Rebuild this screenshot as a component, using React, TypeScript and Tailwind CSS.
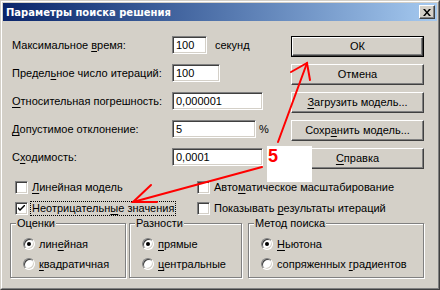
import React from 'react'

const font = "font-['Liberation_Sans',Arial,sans-serif]"

const raised =
  'border border-t-white border-l-white border-b-[#404040] border-r-[#404040] shadow-[inset_-1px_-1px_0_#808080,inset_1px_1px_0_#d4d0c8]'
const sunken =
  'border border-t-[#808080] border-l-[#808080] border-b-white border-r-white shadow-[inset_1px_1px_0_#404040,inset_-1px_-1px_0_#d4d0c8]'

function U({ children }: { children: React.ReactNode }) {
  return <span className="underline underline-offset-[2px]">{children}</span>
}

function Field({ value, w }: { value: string; w: string }) {
  return (
    <div className={`${sunken} ${w} h-[18px] bg-white pl-[3px] leading-[16px]`}>{value}</div>
  )
}

function Btn({ children, def }: { children: React.ReactNode; def?: boolean }) {
  if (def) {
    return (
      <div className="h-[21px] border border-black">
        <div className={`${raised} h-full flex items-center justify-center`}>{children}</div>
      </div>
    )
  }
  return <div className={`${raised} h-[21px] flex items-center justify-center`}>{children}</div>
}

function Check({ checked, focus, children }: { checked?: boolean; focus?: boolean; children: React.ReactNode }) {
  return (
    <div className="h-[21px] flex items-center">
      <div className={`${sunken} w-[13px] h-[13px] bg-white flex items-center justify-center shrink-0`}>
        {checked && (
          <svg width="7" height="7" viewBox="0 0 7 7">
            <path d="M0 2 L0 4 L2 6 L7 1 L7 -1 L2 4 Z" fill="#000" />
          </svg>
        )}
      </div>
      <span
        className={`ml-[2px] px-[1px] leading-[13px] border ${focus ? 'border-dotted border-black' : 'border-transparent'}`}
      >
        {children}
      </span>
    </div>
  )
}

function Radio({ on, children }: { on?: boolean; children: React.ReactNode }) {
  return (
    <div className="h-[20px] flex items-center">
      <div className="w-[12px] h-[12px] rounded-full bg-white border border-t-[#808080] border-l-[#808080] border-b-white border-r-white shadow-[inset_1px_1px_0_#404040,inset_-1px_-1px_0_#d4d0c8] flex items-center justify-center shrink-0">
        {on && <div className="w-[4px] h-[4px] rounded-full bg-black" />}
      </div>
      <span className="ml-[4px]">{children}</span>
    </div>
  )
}

function Group({ title, w, children }: { title: string; w: string; children: React.ReactNode }) {
  return (
    <div
      className={`relative ${w} h-[55px] border border-[#808080] shadow-[1px_1px_0_#fff,inset_1px_1px_0_#fff] pl-[12px] pt-[10px]`}
    >
      <span className="absolute left-[5px] -top-[7px] bg-[#d4d0c8] px-[1px] leading-[13px]">{title}</span>
      {children}
    </div>
  )
}

export default function App() {
  return (
    <div className={`${font} text-[11px] text-black w-[440px] h-[290px] bg-[#d4d0c8] flex border border-t-[#d4d0c8] border-l-[#d4d0c8] border-b-[#404040] border-r-[#404040]`}>
      <div className="flex-1 flex flex-col p-px border border-t-white border-l-white border-b-[#808080] border-r-[#808080]">
        <div className="h-[18px] flex items-center bg-gradient-to-r from-[#0a246a] to-[#a6caf0] pl-[3px] pr-[2px]">
          <span className="text-white font-bold text-[10px] font-['DejaVu_Sans',sans-serif]">Параметры поиска решения</span>
          <div className={`${raised} ml-auto w-[16px] h-[14px] bg-[#d4d0c8] flex items-center justify-center`}>
            <svg width="8" height="7" viewBox="0 0 8 7">
              <path d="M0 0h2l2 2.5L6 0h2L5 3.5 8 7H6L4 4.5 2 7H0l3-3.5z" fill="#000" />
            </svg>
          </div>
        </div>

        <div className="flex-1 pl-[9px] pt-[15px]">
          <div className="flex">
            <div className="w-[279px]">
              <div className="h-[28px] flex items-start">
                <span className="w-[160px] leading-[18px]">Максимальное <U>в</U>ремя:</span>
                <Field value="100" w="w-[35px]" />
                <span className="ml-[8px] leading-[18px]">секунд</span>
              </div>
              <div className="h-[28px] flex items-start">
                <span className="w-[160px] leading-[18px]">Предел<U>ь</U>ное число итераций:</span>
                <Field value="100" w="w-[48px]" />
              </div>
              <div className="h-[28px] flex items-start">
                <span className="w-[160px] leading-[18px]"><U>О</U>тносительная погрешность:</span>
                <Field value="0,000001" w="w-[91px]" />
              </div>
              <div className="h-[28px] flex items-start">
                <span className="w-[160px] leading-[18px]"><U>Д</U>опустимое отклонение:</span>
                <Field value="5" w="w-[84px]" />
                <span className="ml-[3px] leading-[18px]">%</span>
              </div>
              <div className="h-[28px] flex items-start">
                <span className="w-[160px] leading-[18px]">С<U>х</U>одимость:</span>
                <Field value="0,0001" w="w-[91px]" />
              </div>
            </div>
            <div className="w-[133px] flex flex-col gap-[7px]">
              <Btn def>ОК</Btn>
              <Btn>Отмена</Btn>
              <Btn><span><U>З</U>агрузить модель...</span></Btn>
              <Btn><span>Сохр<U>а</U>нить модель...</span></Btn>
              <Btn><span><U>С</U>правка</span></Btn>
            </div>
          </div>

          <div className="mt-[1px] pl-[3px] grid grid-cols-[182px_1fr]">
            <Check><U>Л</U>инейная модель</Check>
            <Check>Авто<U>м</U>атическое масштабирование</Check>
            <Check checked focus>Неотрицательн<U>ы</U>е значения</Check>
            <Check>Показывать <U>р</U>езультаты итераций</Check>
          </div>

          <div className="mt-[4px] -ml-[2px] flex">
            <Group title="Оценки" w="w-[116px]">
              <Radio on>лин<U>е</U>йная</Radio>
              <Radio><U>к</U>вадратичная</Radio>
            </Group>
            <Group title="Разности" w="w-[113px] ml-[3px]">
              <Radio on><U>п</U>рямые</Radio>
              <Radio><U>ц</U>ентральные</Radio>
            </Group>
            <Group title="Метод поиска" w="w-[176px] ml-[6px]">
              <Radio on><U>Н</U>ьютона</Radio>
              <Radio>сопряженных <U>г</U>радиентов</Radio>
            </Group>
          </div>
        </div>
      </div>

      <div className="absolute left-[267px] top-[146px] w-[45px] h-[36px] bg-white">
        <span className="block pl-[1px] text-[#ff0000] font-bold text-[18px] leading-[20px]">5</span>
      </div>
      <svg className="absolute left-0 top-0 pointer-events-none" width="440" height="290">
        <g stroke="#ff0000" strokeWidth="2" strokeLinecap="round" fill="none">
          <path d="M278 142 L307 63" />
          <path d="M291 72 L307 63 L310 80" />
          <path d="M262 167 L133 202" />
          <path d="M151 185 L133 202 L157 202" />
        </g>
      </svg>
    </div>
  )
}
